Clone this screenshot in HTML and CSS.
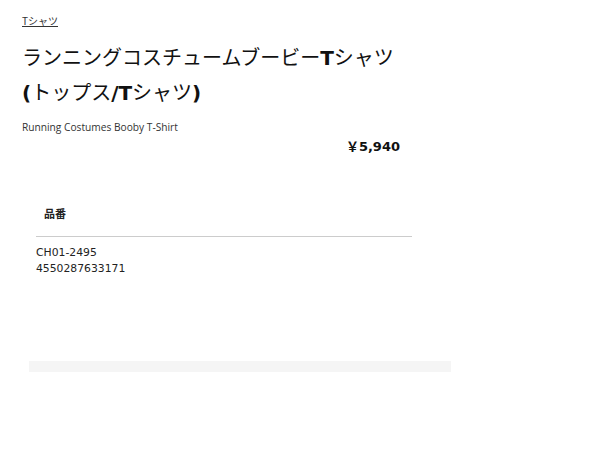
FILE: index.html
```html
<!DOCTYPE html>
<html lang="ja">
<head>
<meta charset="utf-8">
<link rel="stylesheet" href="styles.css">
</head>
<body>
<div class="page">
  <nav class="crumbs"><a href="#">Tシャツ</a></nav>
  <h1 class="title">ランニングコスチュームブービー<b>T</b>シャツ<br><b>(</b>トップス<b>/T</b>シャツ<b>)</b></h1>
  <p class="subtitle">Running Costumes Booby T-Shirt</p>
  <div class="price-row"><span class="price">￥5,940</span></div>
  <div class="spec">
    <div class="spec-head">品番</div>
    <div class="spec-body">
      <div>CH01-2495</div>
      <div>4550287633171</div>
    </div>
  </div>
  <div class="bar"></div>
</div>
</body>
</html>
```
FILE: styles.css
```css
html, body { margin: 0; padding: 0; background: #fff; }
body {
  font-family: "DejaVu Sans", "Noto Sans CJK JP", sans-serif;
  color: #222;
}
.page { padding: 14px 0 0 22px; }
.crumbs { font-size: 10px; line-height: 14px; height: 14px; }
.crumbs a { color: #333; text-decoration: underline; font-family: "Noto Sans CJK JP", sans-serif; }
.title {
  margin: 12px 0 0 0;
  font-family: "Noto Sans CJK JP", sans-serif;
  font-weight: normal;
  font-size: 20px;
  line-height: 34px;
  color: #111;
  letter-spacing: 0;
}
.title b { font-family: "DejaVu Sans", sans-serif; font-weight: bold; }
.subtitle {
  margin: 10px 0 0 0;
  font-family: "Open Sans", sans-serif;
  font-size: 10.2px;
  line-height: 14px;
  color: #333;
}
.price-row { width: 378px; display: flex; justify-content: flex-end; margin-top: 3px; }
.price { font-family: "DejaVu Sans", "Noto Sans CJK JP", sans-serif; font-weight: bold; font-size: 13px; line-height: 20px; color: #111; }
.spec { width: 376px; margin: 48px 0 0 14px; }
.spec-head {
  font-family: "Noto Sans CJK JP", sans-serif;
  font-weight: bold;
  font-size: 11px;
  line-height: 16px;
  padding: 0 0 15px 8px;
  border-bottom: 1px solid #ccc;
}
.spec-body {
  padding-top: 8px;
  font-family: "DejaVu Sans", sans-serif;
  font-size: 10.8px;
  line-height: 16px;
  color: #222;
}
.bar { width: 422px; height: 11px; background: #f5f5f5; margin: 84px 0 0 7px; }
```
